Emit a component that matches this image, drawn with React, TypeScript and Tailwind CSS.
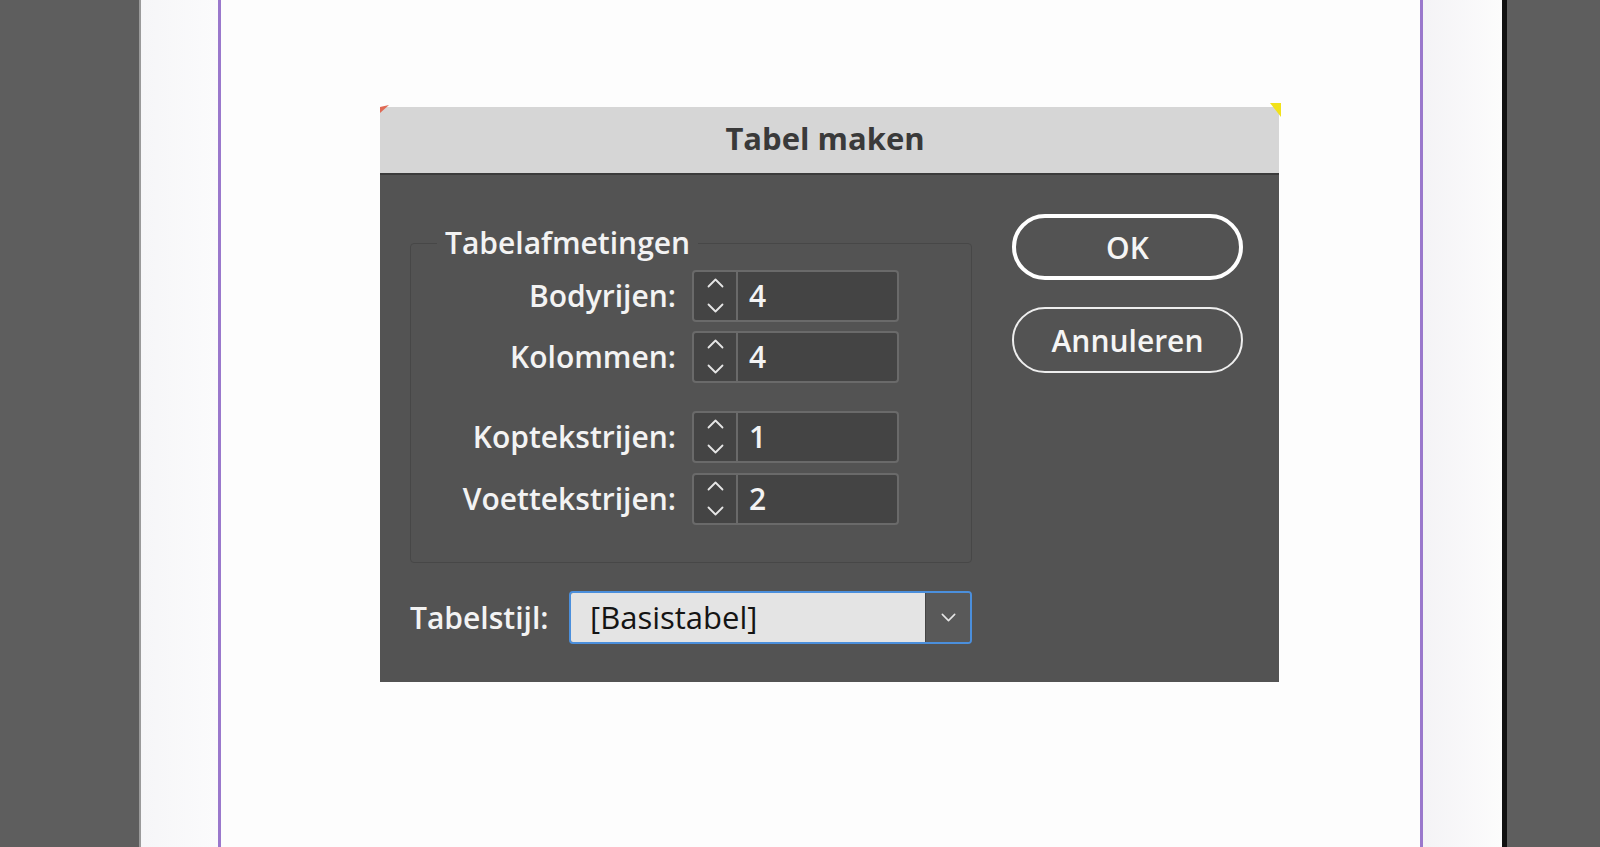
import React from "react";

const font = { fontFamily: '"Open Sans", "Noto Sans", "Liberation Sans", sans-serif' };

function ChevUp() {
  return (
    <svg width="17" height="10" viewBox="0 0 17 10" fill="none">
      <polyline points="1.5,8.5 8.5,1.5 15.5,8.5" stroke="#e6e6e6" strokeWidth="1.8" strokeLinecap="round" strokeLinejoin="round" />
    </svg>
  );
}
function ChevDown({ w = 17, h = 10 }: { w?: number; h?: number }) {
  return (
    <svg width={w} height={h} viewBox="0 0 17 10" fill="none">
      <polyline points="1.5,1.5 8.5,8.5 15.5,1.5" stroke="#e6e6e6" strokeWidth="1.8" strokeLinecap="round" strokeLinejoin="round" />
    </svg>
  );
}

function SpinRow({ label, value, className = "" }: { label: string; value: string; className?: string }) {
  return (
    <div className={"flex items-center h-[52px] " + className}>
      <div className="w-[265px] text-right text-[30px] font-semibold leading-[52px] text-[#f3f3f3]">{label}</div>
      <div className="ml-[16px] flex h-[52px] w-[207px] rounded-[4px] border-2 border-[#6a6a6a] bg-[#444444]">
        <div className="flex w-[44px] flex-col items-center pt-[6px] gap-[15px] border-r-2 border-[#6a6a6a]">
          <ChevUp />
          <ChevDown />
        </div>
        <div className="flex-1 pl-[11px] text-[30px] font-semibold leading-[48px] text-[#f3f3f3]">{value}</div>
      </div>
    </div>
  );
}

export default function App() {
  return (
    <div className="flex h-[847px] w-[1600px] overflow-hidden bg-[#5e5e5e]" style={font}>
      <div className="w-[139px] shrink-0 bg-[#5e5e5e]" />
      <div className="flex w-[1363px] shrink-0 border-l-2 border-[#9a9a9a] bg-[#fdfdfd]">
        <div className="w-[77px] shrink-0 bg-gradient-to-r from-[#f6f6f8] to-[#fbfbfc]" />
        <div className="w-[3px] shrink-0 bg-[#9a78cc]" />
        <div className="w-[1199px] shrink-0 pl-[159px] pt-[107px]">
          <div className="relative w-[899px] bg-[#535353]">
            <svg className="absolute left-0 top-[-2px]" width="10" height="9" viewBox="0 0 10 9">
              <polygon points="0,2 9,0 0,8" fill="#e06a55" />
            </svg>
            <svg className="absolute right-[-2px] top-[-4px]" width="11" height="15" viewBox="0 0 11 15">
              <polygon points="0,0 11,0 11,14" fill="#f2e21a" />
            </svg>
            <div className="flex h-[68px] items-center justify-center border-b-2 border-[#3b3b3b] bg-[#d6d6d6] pr-[9px] pb-[3px] text-[31px] font-bold text-[#3a3a3a]">
              Tabel maken
            </div>
            <div className="flex pl-[30px] pr-[36px] pt-[39px] pb-[38px]">
              <div className="w-[562px]">
                <fieldset className="mt-[11px] rounded-[4px] border border-[#474747] px-0 pt-[9px] pb-[37px]">
                  <legend className="ml-[26px] px-[8px] text-[30px] font-semibold leading-[36px] text-[#f3f3f3]">Tabelafmetingen</legend>
                  <SpinRow label="Bodyrijen:" value="4" />
                  <SpinRow label="Kolommen:" value="4" className="mt-[9px]" />
                  <SpinRow label="Koptekstrijen:" value="1" className="mt-[28px]" />
                  <SpinRow label="Voettekstrijen:" value="2" className="mt-[10px]" />
                </fieldset>
                <div className="mt-[28px] flex items-center">
                  <div className="text-[30px] font-semibold leading-[53px] text-[#f3f3f3]">Tabelstijl:</div>
                  <div className="ml-auto flex h-[53px] w-[403px] overflow-hidden rounded-[4px] border-2 border-[#4b8fdc]">
                    <div className="flex-1 bg-[#e4e4e4] pl-[19px] text-[31px] leading-[49px] text-[#141414]">[Basistabel]</div>
                    <div className="flex w-[45px] items-center justify-center border-l border-[#454545] bg-[#595959]">
                      <ChevDown w={15} h={9} />
                    </div>
                  </div>
                </div>
              </div>
              <div className="ml-[40px] flex flex-col">
                <div className="flex h-[66px] w-[231px] items-center justify-center rounded-full border-[4px] border-white text-[30px] font-semibold text-[#f5f5f5]">
                  OK
                </div>
                <div className="mt-[27px] flex h-[66px] w-[231px] items-center justify-center rounded-full border-2 border-[#eeeeee] text-[30px] font-semibold text-[#f5f5f5]">
                  Annuleren
                </div>
              </div>
            </div>
          </div>
        </div>
        <div className="w-[3px] shrink-0 bg-[#9a78cc]" />
        <div className="flex-1 bg-gradient-to-r from-[#f4f3f6] to-[#fcfcfc]" />
      </div>
      <div className="w-[5px] shrink-0 bg-[#111111]" />
      <div className="flex-1 bg-[#5e5e5e]" />
    </div>
  );
}
